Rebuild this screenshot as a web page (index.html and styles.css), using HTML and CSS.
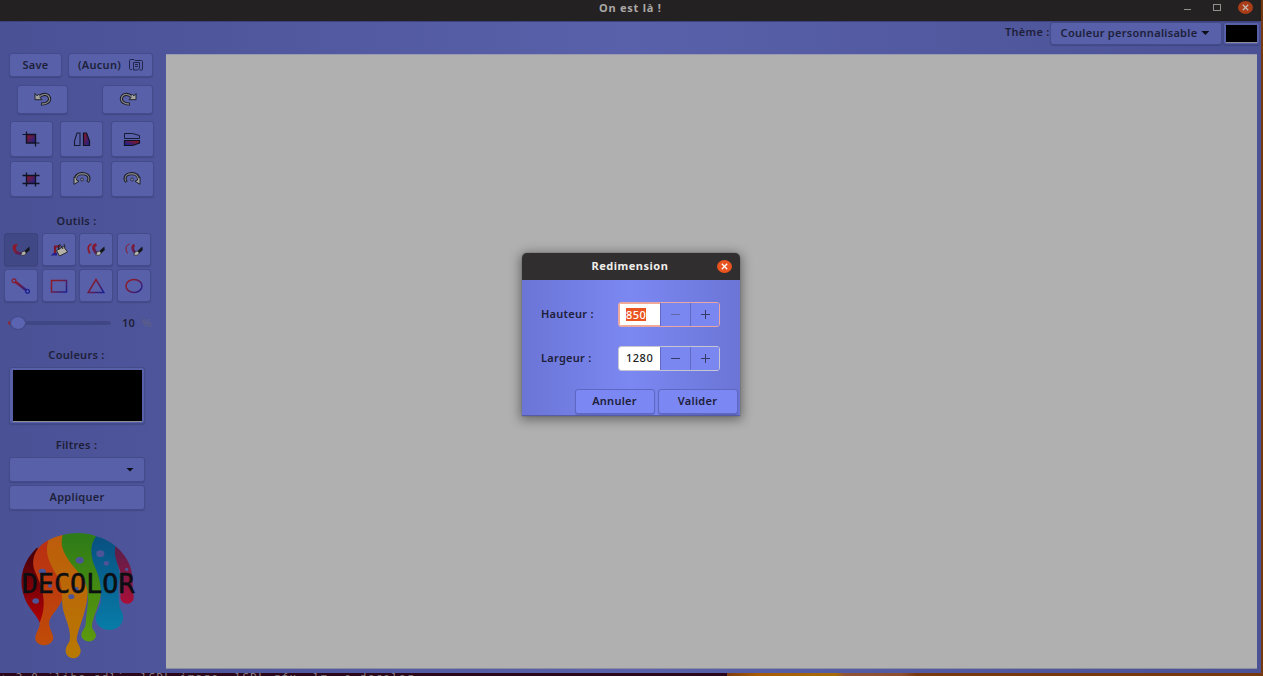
FILE: index.html
```html
<!DOCTYPE html>
<html lang="fr">
<head>
<meta charset="utf-8">
<title>On est là !</title>
<link rel="stylesheet" href="styles.css">
</head>
<body>
<svg class="defs" width="0" height="0">
  <defs>
    <linearGradient id="rb" x1="0" y1="0" x2="1" y2="1"><stop offset=".1" stop-color="#85182a"/><stop offset=".9" stop-color="#20208a"/></linearGradient>
    <linearGradient id="br" x1="0" y1="1" x2="1" y2="0"><stop offset=".2" stop-color="#20208a"/><stop offset=".8" stop-color="#85182a"/></linearGradient>
    <linearGradient id="rbu" gradientUnits="userSpaceOnUse" x1="2" y1="2" x2="17" y2="16"><stop offset=".2" stop-color="#8b1a2c"/><stop offset=".9" stop-color="#1c2090"/></linearGradient>
    <g id="undo" fill="none">
      <path d="M5 5Q10 .5 14 3.500Q17.500 7.500 13.500 10.500Q11 12.200 7 12" stroke="#17181f" stroke-width="3.200"/>
      <path d="M1 1.500V7.700H8L6 5.500L7 4L4.500 2.500L3 3.800Z" fill="#a3a49f" stroke="#17181f" stroke-width=".9"/>
      <path d="M5 5Q10 .5 14 3.500Q17.500 7.500 13.500 10.500Q11 12.200 7.800 12" stroke="#85868a" stroke-width="1.300"/>
    </g>
    <g id="turn" fill="none">
      <path d="M2.500 9Q2 3 9 2.600Q17 3 15.800 9L14.500 11" stroke="#17181f" stroke-width="3"/>
      <path d="M1 6V13.300L6 10.300L3.500 9V7Z" fill="#a3a49f" stroke="#17181f" stroke-width=".9"/>
      <path d="M2.800 8Q3 3 9 2.600Q17 3 15.800 9L14.800 10.500" stroke="#85868a" stroke-width="1.100"/>
      <circle cx="9" cy="8.500" r="1.500" fill="#777b99" stroke="#25283f" stroke-width=".8"/>
    </g>
    <g id="brush">
      <path d="M12 9.500L17.300 4.500L17.800 8L14 11.500Z" fill="#15161c"/>
      <path d="M8.800 13.200L10 10L12.500 9L14.200 11L12.500 13.300Z" fill="#b5b5b0" stroke="#222" stroke-width=".6"/>
    </g>
  </defs>
</svg>
<div class="window">
  <header class="titlebar">
    <span class="title">On est là !</span>
    <span class="min"></span><span class="max"></span>
    <span class="close"><svg width="7" height="7" viewBox="0 0 7 7"><path d="M.8.8l5.4 5.4M6.2.8L.8 6.2"/></svg></span>
  </header>
  <div class="content">
    <div class="theme">
      <span class="label theme-label">Thème :</span>
      <button class="btn theme-select"><span>Couleur personnalisable</span><i class="caret"></i></button>
      <button class="btn theme-color"><i></i></button>
    </div>
    <div class="main">
      <aside class="sidebar">
        <div class="row files">
          <button class="btn save">Save</button>
          <button class="btn file"><span>(Aucun)</span>
            <svg width="14" height="12" viewBox="0 0 14 12" fill="none" stroke="#22254a"><path d="M3 10.500H1.500Q.5 10.500.5 9.500V1.500Q.5.5 1.500.5H5L6 1.500H12.500Q13.500 1.500 13.500 2.500V10Q13.500 11 12.500 11H10.500"/><path d="M4.500 3.500H10.500V9L8.500 11H4.500Z"/><path d="M6 5.500H9M6 7.500H9"/></svg>
          </button>
        </div>
        <div class="row history">
          <button class="btn"><svg width="18" height="14" viewBox="0 0 18 14"><use href="#undo"/></svg></button>
          <button class="btn"><svg width="18" height="14" viewBox="0 0 18 14"><use href="#undo" transform="matrix(-1 0 0 1 18 0)"/></svg></button>
        </div>
        <div class="transforms">
          <button class="btn"><svg width="18" height="16" viewBox="0 0 18 16"><path d="M4.500 3.500H13.500V12H4.500Z" fill="url(#rb)" stroke="#101223" stroke-width="1.400"/><path d="M.5 3.500H5M4.500 .5V4M13 12H17.500M13.500 11V15.500" stroke="#101223" stroke-width="1.200"/></svg></button>
          <button class="btn"><svg width="18" height="16" viewBox="0 0 18 16"><path d="M1.500 14.500V10L4 2H7V14.500Z" fill="none" stroke="#171a35" stroke-width="1.100"/><path d="M10.500 2H13.500L16.500 10V14.500H10.500Z" fill="url(#rb)" stroke="#101223" stroke-width="1.200"/></svg></button>
          <button class="btn"><svg width="18" height="16" viewBox="0 0 18 16"><path d="M1.500 2.500H9.500L16.500 4.500V7.500H1.500Z" fill="none" stroke="#171a35"/><path d="M1.500 9.500H16.500V12L9.500 14.500H1.500Z" fill="url(#br)" stroke="#101223" stroke-width="1.200"/></svg></button>
          <button class="btn"><svg width="18" height="16" viewBox="0 0 18 16"><path d="M4.500 4.500H13.500V12.500H4.500Z" fill="url(#rb)"/><path d="M.5 4.500H17.500M.5 12.500H17.500M4.500 1.500V15.500M13.500 1.500V15.500" stroke="#101223" stroke-width="1.300"/></svg></button>
          <button class="btn"><svg width="18" height="16" viewBox="0 0 18 16"><use href="#turn"/></svg></button>
          <button class="btn"><svg width="18" height="16" viewBox="0 0 18 16"><use href="#turn" transform="matrix(-1 0 0 1 18 0)"/></svg></button>
        </div>
        <div class="label heading outils">Outils :</div>
        <div class="tools">
          <button class="btn active"><svg width="18" height="16" viewBox="0 0 18 16"><path d="M6 2Q1 1.500.5 5Q1 11 5.500 12.500Q8 13.300 10.500 12L10 10.500Q4.500 10 4 7Q3.500 4 6 2Z" fill="url(#rbu)"/><use href="#brush"/></svg></button>
          <button class="btn"><svg width="18" height="16" viewBox="0 0 18 16"><path d="M10 4.500H5V11" fill="none" stroke="#7e172d" stroke-width="2.200"/><path d="M.5 13.500L3.500 11H7V13.500Z" fill="#25208a"/><path d="M6.500 8.500L13.500 4.500L17.500 10L9.500 14Z" fill="#b3b1a8" stroke="#222" stroke-width=".9"/><path d="M9 8L8 4L10 2.500L13 7M14 2L15 5.500" fill="none" stroke="#222"/></svg></button>
          <button class="btn"><svg width="18" height="16" viewBox="0 0 18 16"><path d="M4.500 2Q-1 4 2.800 11.500" fill="none" stroke="#8b1a2c" stroke-width="1.800"/><path d="M9.500 2.500Q5.500 3.500 7 7.500Q8 10.500 10.500 11.500" fill="none" stroke="url(#rbu)" stroke-width="3"/><use href="#brush"/></svg></button>
          <button class="btn"><svg width="18" height="16" viewBox="0 0 18 16"><path d="M4.500 2Q-1.500 4 2.500 11.500" fill="none" stroke="#8b1a2c"/><path d="M9.500 3Q7 4 8 7.500Q9 10 10.500 11" fill="none" stroke="url(#rbu)" stroke-width="2.600"/><use href="#brush"/></svg></button>
          <button class="btn"><svg width="20" height="16" viewBox="0 0 20 16"><path d="M4 3.500L15.500 12.500" stroke="url(#rbu)" stroke-width="2.600"/><circle cx="3" cy="2.700" r="1.900" fill="none" stroke="#8b1a2c" stroke-width="1.300"/><circle cx="16.500" cy="13.300" r="1.900" fill="none" stroke="#1c2090" stroke-width="1.300"/></svg></button>
          <button class="btn"><svg width="18" height="16" viewBox="0 0 18 16"><path d="M1.500 2.500H16.500V14H1.500Z" fill="none" stroke="url(#rbu)" stroke-width="1.500"/></svg></button>
          <button class="btn"><svg width="18" height="16" viewBox="0 0 18 16"><path d="M9 1.500L16.800 14.500H1.200Z" fill="none" stroke="url(#rbu)" stroke-width="1.500"/></svg></button>
          <button class="btn"><svg width="18" height="16" viewBox="0 0 18 16"><ellipse cx="9" cy="8" rx="8" ry="6.500" fill="none" stroke="url(#rbu)" stroke-width="1.500"/></svg></button>
        </div>
        <div class="slider">
          <div class="track"><i class="fill"></i><i class="thumb"></i></div>
          <span class="value">10</span><span class="pct">%</span>
        </div>
        <div class="label heading couleurs">Couleurs :</div>
        <button class="btn color"><i></i></button>
        <div class="label heading filtres">Filtres :</div>
        <button class="btn filter"><i class="caret"></i></button>
        <button class="btn apply">Appliquer</button>
        <svg class="logo" width="125" height="135" viewBox="45 45 375 405">
          <defs>
            <linearGradient id="l1" x1="0" y1="0" x2="0" y2="1"><stop offset=".1" stop-color="#4b0008"/><stop offset="1" stop-color="#b20006"/></linearGradient>
            <linearGradient id="l2" x1="0" y1="0" x2="0" y2="1"><stop offset="0" stop-color="#b92f13"/><stop offset="1" stop-color="#c04c08"/></linearGradient>
            <linearGradient id="l3" x1="0" y1="0" x2="0" y2="1"><stop offset="0" stop-color="#bd5c0c"/><stop offset="1" stop-color="#b77900"/></linearGradient>
            <linearGradient id="l4" x1="0" y1="0" x2="0" y2="1"><stop offset="0" stop-color="#2d7a18"/><stop offset="1" stop-color="#5c9a0c"/></linearGradient>
            <linearGradient id="l5" x1="0" y1="0" x2="0" y2="1"><stop offset="0" stop-color="#085080"/><stop offset="1" stop-color="#087ca8"/></linearGradient>
            <linearGradient id="l6" x1="0" y1="0" x2="0" y2="1"><stop offset="0" stop-color="#58204c"/><stop offset="1" stop-color="#a80f38"/></linearGradient>
          </defs>
          <path d="M112 100C70 140 55 190 70 240C80 280 110 300 120 328L140 270L130 180Z" fill="url(#l1)"/>
          <path d="M146 78C112 95 90 130 104 170C125 215 145 265 119 326C120 345 105 355 106 375C110 400 155 400 160 373C160 355 145 345 148 320C160 290 195 270 190 225L160 140Z" fill="url(#l2)"/>
          <path d="M188 63Q164 67 146 78C130 120 155 160 178 195C190 225 183 260 190 290C200 325 214 350 209 380C205 390 197 395 197 412C200 440 240 440 242 411C242 398 232 390 230 378C230 350 260 300 264 230L240 160Z" fill="url(#l3)"/>
          <path d="M188 63C220 54 260 55 288 67L290 150L304 220C304 270 275 310 276 340C279 350 288 355 288 366C283 388 248 388 244 364C244 352 255 345 257 330C258 300 272 250 257 205C235 165 170 120 188 63Z" fill="url(#l4)"/>
          <path d="M288 67Q320 75 346 96L360 190C350 220 357 260 359 280C366 295 371 302 369 315C362 360 293 358 287 316C285 295 300 285 303 260C306 210 294 180 281 150C270 115 272 90 288 67Z" fill="url(#l5)"/>
          <path d="M346 96C375 120 392 150 396 180C400 205 396 225 401 245C405 275 363 278 361 250C361 235 368 225 368 205C368 170 338 140 346 96Z" fill="url(#l6)"/>
          <g fill="#4c5497"><ellipse cx="239" cy="139" rx="12" ry="10"/><ellipse cx="301" cy="119" rx="12" ry="10"/><ellipse cx="319" cy="148" rx="8" ry="7"/><ellipse cx="127" cy="172" rx="11" ry="8"/><ellipse cx="107" cy="261" rx="10" ry="8"/><ellipse cx="214" cy="248" rx="9" ry="7"/><circle cx="150" cy="215" r="6"/><circle cx="229" cy="226" r="7"/><circle cx="380" cy="166" r="5"/></g>
          <text x="65" y="236" textLength="339" lengthAdjust="spacingAndGlyphs" class="logo-text">DECOLOR</text>
        </svg>
      </aside>
      <div class="canvas"></div>
    </div>
  </div>
</div>
<div class="terminal"><span>: 2.0 `libs-sdl` -lSDL_image -lSDL_gfx -lm -o decolor</span><i class="wall"></i></div>

<div class="dialog">
  <div class="dialog-title"><span>Redimension</span>
    <b class="close"><svg width="7" height="7" viewBox="0 0 7 7"><path d="M.8.8l5.4 5.4M6.200.8L.8 6.200"/></svg></b>
  </div>
  <div class="dialog-body">
    <div class="field"><span class="label">Hauteur :</span>
      <div class="spin focus"><span class="num"><mark>850</mark></span><button class="minus"></button><button class="plus"></button></div></div>
    <div class="field second"><span class="label">Largeur :</span>
      <div class="spin"><span class="num">1280</span><button class="minus"></button><button class="plus"></button></div></div>
    <div class="actions"><button class="btn light">Annuler</button><button class="btn light">Valider</button></div>
  </div>
</div>
</body>
</html>
```
FILE: styles.css
```css
* { box-sizing: border-box; }
body {
  margin: 0; width: 1263px; height: 676px; overflow: hidden;
  background: #76380f; position: relative;
  font: 600 11px/14px "Noto Sans", "Open Sans", sans-serif;
  letter-spacing: .28px; color: #1e203a;
}
svg { display: block; flex: none; }
.defs { position: absolute; }
button { font: inherit; letter-spacing: inherit; color: inherit; padding: 0; margin: 0; }
.window { width: 1261px; height: 673px; }
.titlebar {
  height: 21px; background: #242122; display: grid; align-items: center;
  grid-template-columns: 1fr 8px 8px 15px; padding: 0 8px 6px 0; column-gap: 21px;
}
.title { color: #aaa8a5; font-weight: 700; padding-left: 599px; letter-spacing: .75px; }
.min { height: 1px; background: #94918d; margin: 4px 0 0 4px; width: 7px; }
.max { height: 7px; width: 8px; border: 1px solid #94918d; margin-left: 4px; }
.close {
  width: 15px; height: 13px; border-radius: 50%; background: #a83d18;
  display: flex; align-items: center; justify-content: center;
}
.close svg path { stroke: #c5b8b0; stroke-width: 1.3; fill: none; }
.titlebar .close { justify-self: end; }
.content {
  height: 652px; border-top: 1px solid #3c427e;
  background: linear-gradient(90deg, #4a5195, #5961aa 50%, #4a5195);
}
.theme { height: 32px; display: flex; justify-content: flex-end; align-items: flex-start; }
.label { white-space: nowrap; }
.theme-label { padding-top: 4px; width: 45px; margin-top: -1px; }
.btn {
  display: flex; align-items: center; justify-content: center;
  background: #5760a9; border: 1px solid #444b8a; border-radius: 3px;
  box-shadow: 0 1px 1px rgba(40, 45, 95, .3);
}
.theme-select { width: 172px; height: 23px; gap: 4px; white-space: nowrap; padding: 0 2px 1px 0; }
.theme-color { width: 37px; height: 23px; margin-left: 1px; margin-right: 1px; }
.theme-color i { width: 31px; height: 18px; background: #000; border-bottom: 1px solid #8f8e96; }
.caret { width: 8px; height: 4px; background: #0d0e18; clip-path: polygon(0 0, 100% 0, 50% 100%); }
.main { display: flex; height: 619px; }
.sidebar { width: 166px; flex: none; }
.canvas { width: 1091px; height: 615px; background: #b0b0b0; border-bottom: 1px solid #8c8d9e; border-top: 1px solid #9a9bb0; }
.row { display: flex; }
.files { padding-left: 9px; gap: 6px; margin-top: -1px; }
.save { width: 53px; height: 24px; }
.file { width: 85px; height: 24px; gap: 8px; }
.history { padding-left: 17px; gap: 34px; margin-top: 8px; }
.history .btn { width: 51px; height: 29px; padding-bottom: 1px; }
.transforms { display: grid; grid-template-columns: repeat(3, 43px); grid-auto-rows: 36px; gap: 4px 7.5px; margin: 7px 0 0 9.5px; }
.heading { width: 153px; text-align: center; }
.outils { margin-top: 17px; }
.tools { display: grid; grid-template-columns: repeat(4, 34px); grid-auto-rows: 33px; gap: 3px 3.5px; margin: 5px 0 0 4px; }
.active { background: #414886; border-color: #3d437d; }
.slider { display: flex; align-items: center; height: 16px; margin: 13px 0 0 8px; }
.track { width: 103px; height: 4px; border-radius: 2px; background: #414785; position: relative; }
.fill { display: block; width: 8px; height: 4px; border-radius: 2px; background: #8b2b37; }
.thumb { position: absolute; left: 2px; top: -5px; width: 16px; height: 14px; border-radius: 50%; background: #5b64b0; border: 1px solid #424986; }
.value { margin-left: 11px; width: 20px; }
.pct { color: #5d5f86; }
.couleurs { margin-top: 17px; }
.color { width: 136px; height: 57px; margin: 5px 0 0 9px; }
.color i { width: 129px; height: 52px; background: #000; border-bottom: 1px solid #8f8e96; }
.filtres { margin-top: 14px; }
.filter { width: 136px; height: 25px; margin: 5px 0 0 9px; justify-content: flex-end; padding-right: 10px; }
.apply { width: 136px; height: 25px; margin: 3px 0 0 9px; padding-bottom: 1px; }
.logo { margin: 19px 0 0 15px; }
.logo-text { font: 400 80px "DejaVu Sans Mono", monospace; letter-spacing: 0; fill: #0d0e12; stroke: #0d0e12; stroke-width: 1.5px; }
.terminal {
  height: 3px; width: 1263px; display: flex; overflow: hidden; background: #2b071c;
  font: 11px/9px "DejaVu Sans Mono", monospace; letter-spacing: 1.2px; color: #8b8081; white-space: pre;
}
.terminal span { width: 727px; flex: none; }
.wall { flex: 1; background: linear-gradient(90deg, #7d3d12, #a85c08 30px, #a66b0b 108px, #925437 118px, #8d4f30 175px, #78390f 190px); }
.dialog {
  position: absolute; left: 522px; top: 253px; width: 217.5px; height: 163px;
  border-radius: 5px 5px 0 0; box-shadow: 0 2px 11px 2px rgba(0, 0, 0, .4), 0 0 1px #333;
}
.dialog-title {
  height: 27px; background: #302e2e; border-radius: 5px 5px 0 0; color: #efedea; font-weight: 700;
  display: flex; align-items: center; justify-content: space-between; padding: 0 8px 1px 69.5px;
  letter-spacing: .5px;
}
.dialog .close { background: #e95420; }
.dialog .close svg path { stroke: #fff; }
.dialog-body {
  height: 136px; padding: 22.5px 2px 0 19px; border-bottom: 1px solid #555da9;
  background: linear-gradient(90deg, #6b75d6, #7c88f2 50%, #6b75d6);
}
.field { display: flex; align-items: center; height: 24px; }
.field .label { width: 77px; padding-bottom: 1px; }
.second { margin-top: 19.5px; }
.spin { width: 102px; height: 25px; border: 1px solid #c7c4d4; border-radius: 3px; display: grid; grid-template-columns: 41px 30px 29px; overflow: hidden; }
.spin.focus { border-color: #e8a6a4; }
.focus .num { box-shadow: inset 1px 1px 0 #f3aa90, inset 0 -1px 0 #f3aa90; }
.num { background: #fff; color: #222; display: flex; align-items: center; padding-left: 7px; font-weight: 500; letter-spacing: .5px; }
mark { background: #e95420; color: #fff; line-height: 13px; }
.spin button {
  border: 0; border-left: 1px solid #626bc4; background: #7b87f0;
  display: grid; place-items: center;
}
.spin button::before, .spin button::after { content: ""; grid-area: 1 / 1; width: 9px; height: 1px; background: #353a66; }
.minus::after { display: none; }
.focus .minus::before { background: #6168a6; }
.plus::after { width: 1px !important; height: 9px !important; }
.actions { display: flex; justify-content: flex-end; gap: 3px; margin-top: 19px; }
.light { width: 80px; height: 25px; background: #7b87f2; border-color: #5e68c2; padding-bottom: 1px; }
```
